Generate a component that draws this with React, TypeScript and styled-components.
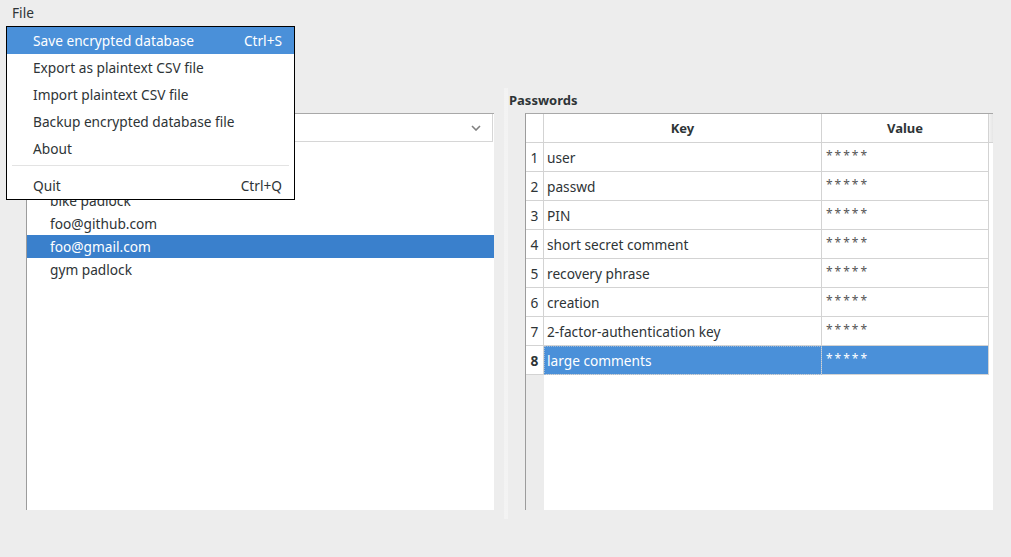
import React from "react";
import styled, { createGlobalStyle, css } from "styled-components";

const GlobalStyle = createGlobalStyle`
  html, body { margin: 0; padding: 0; background: #ededed; }
  body { font-family: "Noto Sans", "DejaVu Sans", sans-serif; font-size: 13.7px; color: #2e3436; }
  * { box-sizing: border-box; }
`;

const Window = styled.div`
  position: relative;
  width: 1011px;
  height: 557px;
  background: #ededed;
  overflow: hidden;
  display: flex;
  flex-direction: column;
`;

const MenuBar = styled.div`
  height: 26px;
  display: flex;
  align-items: center;
  padding-left: 4px;
`;

const MenuBarItem = styled.div`
  padding: 0 8px;
  line-height: 26px;
`;

const Body = styled.div`
  display: flex;
  padding-top: 62px;
  height: 493px;
`;

const Pane = styled.div<{ $width?: number; $right: number }>`
  display: flex;
  flex-direction: column;
  ${(p) => (p.$width ? css`width: ${p.$width}px;` : css`flex: 1;`)}
  padding: 0 ${(p) => p.$right}px 9px 0;
`;

const PaneTitle = styled.div`
  height: 25px;
  line-height: 25px;
  padding-left: 1px;
  font-weight: bold;
  font-size: 13px;
`;

const Frame = styled.div<{ $indent: number }>`
  flex: 1;
  margin-left: ${(p) => p.$indent}px;
  display: flex;
  flex-direction: column;
  border-left: 1px solid #9c9c9c;
  border-top: 1px solid #a8a8a8;
  background: #fff;
  min-height: 0;
`;

const Combo = styled.div`
  height: 28px;
  margin-right: 1px;
  border-right: 1px solid #d6d6d6;
  border-bottom: 1px solid #d6d6d6;
  display: flex;
  align-items: center;
  justify-content: flex-end;
  padding-right: 11px;
  background: #fff;
`;

const Chevron = () => (
  <svg width="10" height="6" viewBox="0 0 10 6">
    <polyline points="1,1 5,5 9,1" fill="none" stroke="#808080" strokeWidth="1.6" />
  </svg>
);

const List = styled.div`
  flex: 1;
  padding-top: 1px;
  display: flex;
  flex-direction: column;
`;

const ListItem = styled.div<{ $selected?: boolean }>`
  height: 23px;
  line-height: 23px;
  padding-left: 23px;
  white-space: nowrap;
  ${(p) =>
    p.$selected &&
    css`
      background: #3a80cc;
      color: #fff;
    `}
`;

const Splitter = styled.div`
  width: 5px;
  display: flex;
  justify-content: center;
  &::before {
    content: "";
    width: 4px;
    height: 100%;
    background-image: radial-gradient(circle, #ffffff 0.5px, transparent 0.8px);
    background-size: 2px 2px;
  }
`;

const Row = styled.div`
  display: flex;
  height: 29px;
  flex-shrink: 0;
`;

const cellBase = css`
  height: 29px;
  border-right: 1px solid #d3d3d3;
  border-bottom: 1px solid #d3d3d3;
  display: flex;
  align-items: center;
  white-space: nowrap;
  overflow: hidden;
`;

const RowHead = styled.div<{ $bold?: boolean }>`
  ${cellBase};
  width: 18px;
  justify-content: center;
  background: #fff;
  font-weight: ${(p) => (p.$bold ? "bold" : "normal")};
`;

const HeaderCell = styled.div<{ $w: number }>`
  ${cellBase};
  width: ${(p) => p.$w}px;
  justify-content: center;
  font-weight: bold;
  font-size: 13px;
  background: #fff;
`;

const HeaderFill = styled.div`
  flex: 1;
  height: 29px;
  border-bottom: 1px solid #d3d3d3;
  background: linear-gradient(to right, #f3f3f3, #e6e6e6);
`;

const Cell = styled.div<{ $w: number; $selected?: boolean; $focus?: boolean; $pad: number }>`
  ${cellBase};
  width: ${(p) => p.$w}px;
  padding-left: ${(p) => p.$pad}px;
  background: ${(p) => (p.$selected ? "#4a90d9" : "#fff")};
  color: ${(p) => (p.$selected ? "#fff" : "inherit")};
  ${(p) =>
    p.$focus &&
    css`
      outline: 1px dotted #9db8d6;
      outline-offset: -1px;
    `}
`;

const Stars = styled.span<{ $selected?: boolean }>`
  font-size: 12px;
  letter-spacing: 2px;
  color: ${(p) => (p.$selected ? "#fff" : "#555")};
  position: relative;
  top: -2px;
`;

const TableFiller = styled.div`
  flex: 1;
  display: flex;
`;

const GutterFill = styled.div`
  width: 18px;
  background: #ececec;
`;

const Menu = styled.div`
  position: absolute;
  top: 26px;
  left: 6px;
  width: 289px;
  border: 1px solid #000;
  background: #fff;
  display: flex;
  flex-direction: column;
`;

const MenuItem = styled.div<{ $active?: boolean }>`
  height: 27px;
  display: flex;
  align-items: center;
  justify-content: space-between;
  padding: 0 12px 0 26px;
  white-space: nowrap;
  ${(p) =>
    p.$active &&
    css`
      background: #4a90d9;
      color: #fff;
    `}
`;

const MenuSeparator = styled.div`
  height: 1px;
  margin: 3px 5px 6px 5px;
  background: #e3e3e3;
`;

const entries = ["", "", "bike padlock", "foo@github.com", "foo@gmail.com", "gym padlock"];

const rows = [
  "user",
  "passwd",
  "PIN",
  "short secret comment",
  "recovery phrase",
  "creation",
  "2-factor-authentication key",
  "large comments",
];

const menuItems: { label: string; shortcut?: string }[] = [
  { label: "Save encrypted database", shortcut: "Ctrl+S" },
  { label: "Export as plaintext CSV file" },
  { label: "Import plaintext CSV file" },
  { label: "Backup encrypted database file" },
  { label: "About" },
];

export default function App() {
  const selectedRow = 7;
  return (
    <>
      <GlobalStyle />
      <Window>
        <MenuBar>
          <MenuBarItem>File</MenuBarItem>
        </MenuBar>
        <Body>
          <Pane $width={503} $right={9}>
            <PaneTitle>&nbsp;</PaneTitle>
            <Frame $indent={26}>
              <Combo>
                <Chevron />
              </Combo>
              <List>
                {entries.map((e, i) => (
                  <ListItem key={i} $selected={e === "foo@gmail.com"}>
                    {e}
                  </ListItem>
                ))}
              </List>
            </Frame>
          </Pane>
          <Splitter />
          <Pane $right={18}>
            <PaneTitle>Passwords</PaneTitle>
            <Frame $indent={17}>
              <Row>
                <RowHead />
                <HeaderCell $w={278}>Key</HeaderCell>
                <HeaderCell $w={167}>Value</HeaderCell>
                <HeaderFill />
              </Row>
              {rows.map((r, i) => {
                const sel = i === selectedRow;
                return (
                  <Row key={r}>
                    <RowHead $bold={sel}>{i + 1}</RowHead>
                    <Cell $w={278} $pad={3} $selected={sel} $focus={sel}>
                      {r}
                    </Cell>
                    <Cell $w={167} $pad={4} $selected={sel}>
                      <Stars $selected={sel}>*****</Stars>
                    </Cell>
                  </Row>
                );
              })}
              <TableFiller>
                <GutterFill />
              </TableFiller>
            </Frame>
          </Pane>
        </Body>
        <Menu>
          {menuItems.map((m, i) => (
            <MenuItem key={m.label} $active={i === 0}>
              <span>{m.label}</span>
              {m.shortcut && <span>{m.shortcut}</span>}
            </MenuItem>
          ))}
          <MenuSeparator />
          <MenuItem>
            <span>Quit</span>
            <span>Ctrl+Q</span>
          </MenuItem>
        </Menu>
      </Window>
    </>
  );
}
